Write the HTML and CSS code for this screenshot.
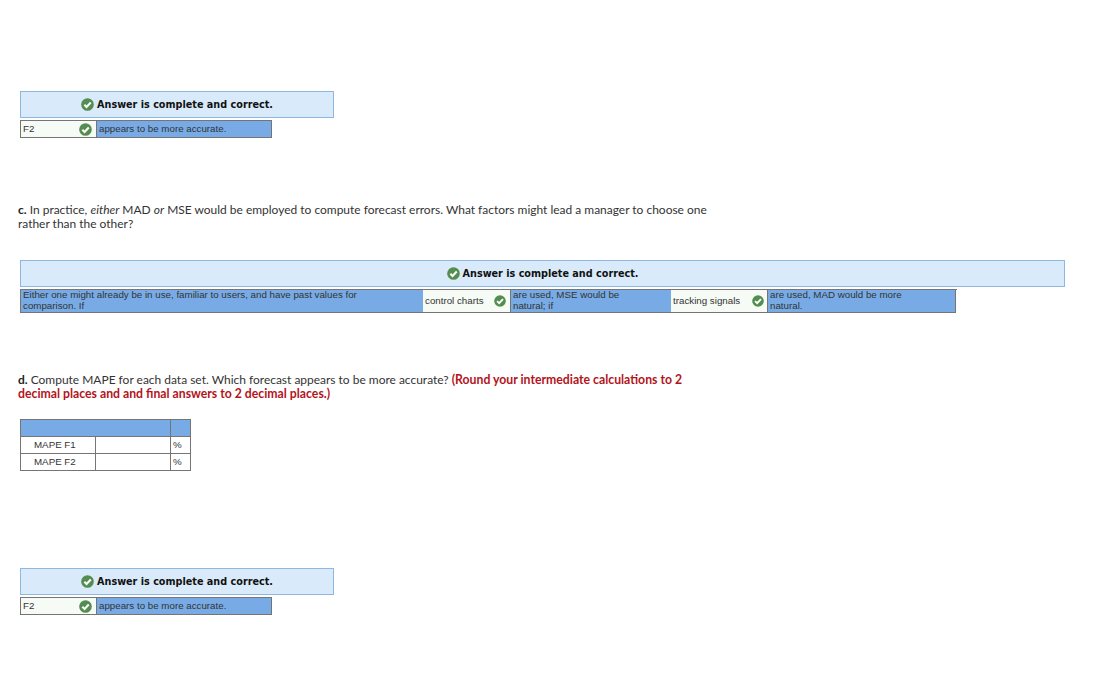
FILE: index.html
```html
<!DOCTYPE html>
<html lang="en">
<head>
<meta charset="utf-8">
<title>Forecast accuracy</title>
<link rel="stylesheet" href="styles.css">
</head>
<body>
<svg class="defs" width="0" height="0" aria-hidden="true"><defs>
<symbol id="ok" viewBox="0 0 14 14"><circle cx="7" cy="7" r="6.8" fill="#548d50"/><path d="M3.6 7.2 6 9.6 10.5 4.8" fill="none" stroke="#fff" stroke-width="2.2"/></symbol>
</defs></svg>
<main class="page">
  <section class="block block-a">
    <div class="banner banner-narrow"><span class="banner-inner"><svg class="ok"><use href="#ok"/></svg><b>Answer is complete and correct.</b></span></div>
    <div class="answer-row answer-short">
      <div class="cell pick"><span>F2</span><svg class="ok"><use href="#ok"/></svg></div>
      <div class="cell fill"><span>appears to be more accurate.</span></div>
    </div>
  </section>

  <p class="question q-c"><b>c.</b> In practice, <i>either</i> MAD <i>or</i> MSE would be employed to compute forecast errors. What factors might lead a manager to choose one<br>rather than the other?</p>

  <section class="block block-c">
    <div class="banner banner-wide"><span class="banner-inner"><svg class="ok"><use href="#ok"/></svg><b>Answer is complete and correct.</b></span></div>
    <div class="answer-row answer-long">
      <div class="cell fill c1"><span>Either one might already be in use, familiar to users, and have past values for comparison. If</span></div>
      <div class="cell pick c2"><span>control charts</span><svg class="ok"><use href="#ok"/></svg></div>
      <div class="cell fill c3"><span>are used, MSE would be<br>natural; if</span></div>
      <div class="cell pick c4"><span>tracking signals</span><svg class="ok"><use href="#ok"/></svg></div>
      <div class="cell fill c5"><span>are used, MAD would be more<br>natural.</span></div>
    </div>
  </section>

  <p class="question q-d"><b>d.</b> Compute MAPE for each data set. Which forecast appears to be more accurate? <b class="warn">(Round your intermediate calculations to 2<br>decimal places and and final answers to 2 decimal places.)</b></p>

  <table class="mape">
    <tr class="head"><td colspan="2"></td><td class="unit"></td></tr>
    <tr><td class="name">MAPE F1</td><td class="val"></td><td class="unit">%</td></tr>
    <tr><td class="name">MAPE F2</td><td class="val"></td><td class="unit">%</td></tr>
  </table>

  <section class="block block-e">
    <div class="banner banner-narrow"><span class="banner-inner"><svg class="ok"><use href="#ok"/></svg><b>Answer is complete and correct.</b></span></div>
    <div class="answer-row answer-short">
      <div class="cell pick"><span>F2</span><svg class="ok"><use href="#ok"/></svg></div>
      <div class="cell fill"><span>appears to be more accurate.</span></div>
    </div>
  </section>
</main>
</body>
</html>
```
FILE: styles.css
```css
html, body { margin: 0; padding: 0; background: #fff; }
.defs { position: absolute; }
.page { width: 1119px; height: 675px; overflow: hidden; padding-top: 91px; box-sizing: border-box; font-family: "Liberation Sans", Arial, sans-serif; color: #333; }

.block { margin-left: 20px; }
.banner { box-sizing: border-box; background: #d9ebfa; border: 1px solid #8fb8e0; height: 27px; display: flex; align-items: center; justify-content: center; }
.banner-narrow { width: 314px; }
.banner-wide { width: 1045px; }
.banner-inner { display: flex; align-items: center; gap: 3px; font-family: "DejaVu Sans", Verdana, sans-serif; font-size: 9.67px; color: #111; }
.ok { width: 13px; height: 13px; flex: none; }

.answer-row { position: relative; display: flex; box-sizing: border-box; border: 1px solid #757575; margin-top: 2px; font-size: 9.75px; line-height: 11px; color: #333; }
.answer-short { width: 252px; height: 18px; }
.answer-long { width: 936px; height: 24px; margin-top: 2px; }
.answer-long::after { content: ""; position: absolute; left: 100%; top: -1px; width: 2px; height: 1px; background: #757575; }
.cell { box-sizing: border-box; display: flex; align-items: center; height: 100%; padding-left: 2px; }
.cell > span { position: relative; top: -1px; }
.pick { background: #f7fbf6; justify-content: space-between; padding-right: 4px; width: 75px; }
.fill { background: #78abe5; flex: 1; border-left: 1px solid #757575; }
.answer-long .cell { flex: none; }
.c1 { width: 402px; border-left: 0; padding-right: 40px; }
.answer-long .pick .ok { width: 12px; height: 12px; }
.answer-long .c2 { width: 87px; }
.c3 { width: 161px; }
.answer-long .c4 { width: 96px; padding-right: 3px; }
.c5 { width: 188px; }

.question { margin: 0 0 0 18px; font-family: Lato, sans-serif; font-size: 11.98px; line-height: 14px; color: #333; }
.question b { color: #222; }
.q-c { margin-top: 65px; }
.block-c { margin-top: 29px; }
.q-d { margin-top: 60px; }
.question .warn { color: #b3141c; font-size: 12.25px; }

.mape { border-collapse: collapse; margin: 18px 0 0 20px; font-size: 9.75px; color: #333; table-layout: fixed; width: 171px; }
.mape td { border: 1px solid #757575; height: 17px; padding: 0 0 2px 2px; box-sizing: border-box; }
.mape .head td { background: #78abe5; height: 17px; }
.mape .name { width: 75px; padding-left: 13px; }
.mape .val { width: 75px; }
.mape .unit { width: 20px; }
.block-e { margin-top: 97px; }
```
